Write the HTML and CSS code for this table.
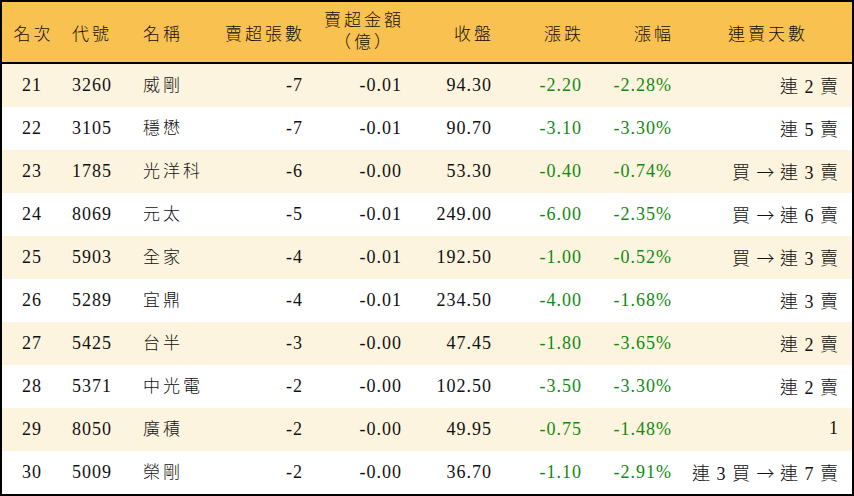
FILE: index.html
```html
<!DOCTYPE html>
<html lang="zh-Hant">
<head>
<meta charset="utf-8">
<link rel="stylesheet" href="styles.css">
</head>
<body>
<div class="board">
  <div class="row head">
    <div class="c c1">名次</div>
    <div class="c c2">代號</div>
    <div class="c c3">名稱</div>
    <div class="c c4">賣超張數</div>
    <div class="c c5"><span class="two">賣超金額<br>（億）</span></div>
    <div class="c c6">收盤</div>
    <div class="c c7">漲跌</div>
    <div class="c c8">漲幅</div>
    <div class="c c9">連賣天數</div>
  </div>
  <div class="row alt">
    <div class="c c1">21</div><div class="c c2">3260</div><div class="c c3">威剛</div><div class="c c4">-7</div><div class="c c5">-0.01</div><div class="c c6">94.30</div><div class="c c7 g">-2.20</div><div class="c c8 g">-2.28%</div><div class="c c9">連 2 賣</div>
  </div>
  <div class="row">
    <div class="c c1">22</div><div class="c c2">3105</div><div class="c c3">穩懋</div><div class="c c4">-7</div><div class="c c5">-0.01</div><div class="c c6">90.70</div><div class="c c7 g">-3.10</div><div class="c c8 g">-3.30%</div><div class="c c9">連 5 賣</div>
  </div>
  <div class="row alt">
    <div class="c c1">23</div><div class="c c2">1785</div><div class="c c3">光洋科</div><div class="c c4">-6</div><div class="c c5">-0.00</div><div class="c c6">53.30</div><div class="c c7 g">-0.40</div><div class="c c8 g">-0.74%</div><div class="c c9">買 <span class="ar">→</span> 連 3 賣</div>
  </div>
  <div class="row">
    <div class="c c1">24</div><div class="c c2">8069</div><div class="c c3">元太</div><div class="c c4">-5</div><div class="c c5">-0.01</div><div class="c c6">249.00</div><div class="c c7 g">-6.00</div><div class="c c8 g">-2.35%</div><div class="c c9">買 <span class="ar">→</span> 連 6 賣</div>
  </div>
  <div class="row alt">
    <div class="c c1">25</div><div class="c c2">5903</div><div class="c c3">全家</div><div class="c c4">-4</div><div class="c c5">-0.01</div><div class="c c6">192.50</div><div class="c c7 g">-1.00</div><div class="c c8 g">-0.52%</div><div class="c c9">買 <span class="ar">→</span> 連 3 賣</div>
  </div>
  <div class="row">
    <div class="c c1">26</div><div class="c c2">5289</div><div class="c c3">宜鼎</div><div class="c c4">-4</div><div class="c c5">-0.01</div><div class="c c6">234.50</div><div class="c c7 g">-4.00</div><div class="c c8 g">-1.68%</div><div class="c c9">連 3 賣</div>
  </div>
  <div class="row alt">
    <div class="c c1">27</div><div class="c c2">5425</div><div class="c c3">台半</div><div class="c c4">-3</div><div class="c c5">-0.00</div><div class="c c6">47.45</div><div class="c c7 g">-1.80</div><div class="c c8 g">-3.65%</div><div class="c c9">連 2 賣</div>
  </div>
  <div class="row">
    <div class="c c1">28</div><div class="c c2">5371</div><div class="c c3">中光電</div><div class="c c4">-2</div><div class="c c5">-0.00</div><div class="c c6">102.50</div><div class="c c7 g">-3.50</div><div class="c c8 g">-3.30%</div><div class="c c9">連 2 賣</div>
  </div>
  <div class="row alt">
    <div class="c c1">29</div><div class="c c2">8050</div><div class="c c3">廣積</div><div class="c c4">-2</div><div class="c c5">-0.00</div><div class="c c6">49.95</div><div class="c c7 g">-0.75</div><div class="c c8 g">-1.48%</div><div class="c c9">1</div>
  </div>
  <div class="row">
    <div class="c c1">30</div><div class="c c2">5009</div><div class="c c3">榮剛</div><div class="c c4">-2</div><div class="c c5">-0.00</div><div class="c c6">36.70</div><div class="c c7 g">-1.10</div><div class="c c8 g">-2.91%</div><div class="c c9">連 3 買 <span class="ar">→</span> 連 7 賣</div>
  </div>
</div>
</body>
</html>
```
FILE: styles.css
```css
html, body {
  margin: 0;
  padding: 0;
  background: #ffffff;
}
.board {
  box-sizing: border-box;
  width: 854px;
  height: 496px;
  border: 2px solid #000;
  font-family: "Liberation Serif", "Noto Sans CJK TC", serif;
  font-size: 18px;
  font-weight: 300;
  color: #111;
  background: #fff;
}
.row {
  display: grid;
  grid-template-columns: 60px 73px 75px 102px 99px 90px 90px 90px 171px;
  height: 43px;
  align-items: center;
  letter-spacing: 1px;
}
.row.alt {
  background: #fcf4df;
}
.row.head {
  height: 60px;
  background: #f9c14f;
  border-bottom: 2px solid #000;
  font-size: 17px;
  letter-spacing: 3px;
}
.c {
  white-space: nowrap;
}
.c1 { text-align: center; }
.c2 { text-align: left; padding-left: 10px; }
.c3 {
  text-align: left;
  padding-left: 8px;
  padding-bottom: 4px;
  font-family: "Noto Sans CJK TC", sans-serif;
  font-size: 17px;
  letter-spacing: 3px;
}
.c4, .c5, .c6, .c7, .c8 { text-align: right; padding-right: 9px; }
.c9 { text-align: right; padding-right: 13px; padding-bottom: 2px; }
.head .c3 { padding-bottom: 0; }
.head .c9 { padding-bottom: 0; }
.head .c4, .head .c5, .head .c6, .head .c7, .head .c8 { padding-right: 7px; }
.head .c1 { padding-left: 3px; }
.head .c9 { text-align: center; padding-right: 0; padding-left: 3px; }
.two {
  display: inline-block;
  text-align: center;
  line-height: 22px;
}
.ar {
  font-family: "Noto Sans CJK TC", sans-serif;
  letter-spacing: 0;
}
.g { color: #118a11; }
```
